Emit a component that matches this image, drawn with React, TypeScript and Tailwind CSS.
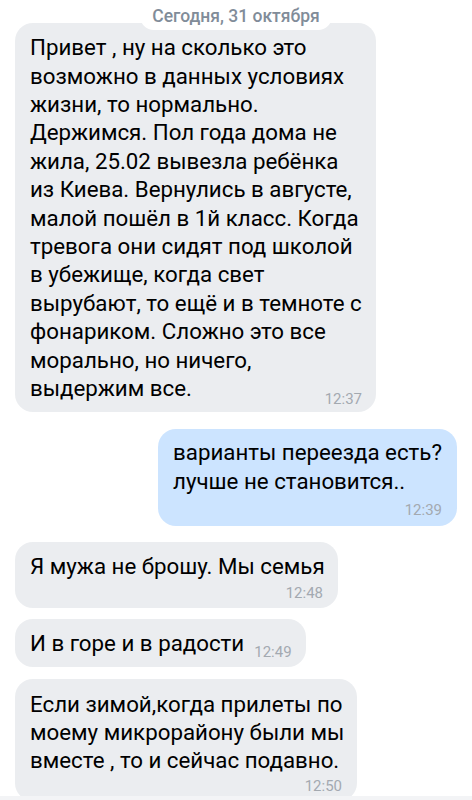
import React from "react";

const font = { fontFamily: "Roboto, 'Noto Sans', Arial, sans-serif" };

function Line({ children }: { children: React.ReactNode }) {
  return <div className="whitespace-nowrap leading-[28.4px]">{children}</div>;
}

function Time({ t }: { t: string }) {
  return <div className="text-[15px] leading-[18px] text-[#a3a9b0] whitespace-nowrap">{t}</div>;
}

export default function App() {
  return (
    <div className="w-[472px] h-[800px] bg-white overflow-hidden flex flex-col" style={font}>
      <div className="flex-1 overflow-hidden flex flex-col text-[22.3px] text-black">
        {/* date pill */}
        <div className="flex justify-center mt-[2px] -mb-[7px] relative z-10 shrink-0">
          <div className="h-[28px] leading-[28px] px-[12px] bg-white rounded-[14px] text-[17.5px] font-medium text-[#818c99] whitespace-nowrap">
            Сегодня, 31 октября
          </div>
        </div>

        {/* bubble 1 */}
        <div className="ml-[15px] w-[361px] bg-[#ebedf0] rounded-[18px] pl-[15px] pr-[14px] pt-[10.2px] pb-[4.5px] shrink-0">
          <Line>Привет , ну на сколько это</Line>
          <Line>возможно в данных условиях</Line>
          <Line>жизни, то нормально.</Line>
          <Line>Держимся. Пол года дома не</Line>
          <Line>жила, 25.02 вывезла ребёнка</Line>
          <Line>из Киева. Вернулись в августе,</Line>
          <Line>малой пошёл в 1й класс. Когда</Line>
          <Line>тревога они сидят под школой</Line>
          <Line>в убежище, когда свет</Line>
          <Line>вырубают, то ещё и в темноте с</Line>
          <Line>фонариком. Сложно это все</Line>
          <Line>морально, но ничего,</Line>
          <div className="flex items-start justify-between">
            <Line>выдержим все.</Line>
            <div className="mt-[15.5px]">
              <Time t="12:37" />
            </div>
          </div>
        </div>

        {/* bubble 2 outgoing */}
        <div className="flex justify-end mt-[17px] pr-[15px] shrink-0">
          <div className="w-[299px] bg-[#cce4ff] rounded-[18px] pl-[15px] pr-[15px] pt-[9.2px] pb-[7px]">
            <Line>варианты переезда есть?</Line>
            <Line>лучше не становится..</Line>
            <div className="flex justify-end mt-[5.5px]">
              <Time t="12:39" />
            </div>
          </div>
        </div>

        {/* bubble 3 */}
        <div className="ml-[15px] mt-[16px] w-[323px] bg-[#ebedf0] rounded-[18px] pl-[15px] pr-[15px] pt-[10.6px] pb-[6px] shrink-0">
          <Line>Я мужа не брошу. Мы семья</Line>
          <div className="flex justify-end mt-[3px]">
            <Time t="12:48" />
          </div>
        </div>

        {/* bubble 4 */}
        <div className="ml-[15px] mt-[11px] w-[291px] bg-[#ebedf0] rounded-[18px] pl-[15px] pr-[15px] pt-[10.2px] pb-[5.8px] shrink-0">
          <div className="flex items-start justify-between">
            <Line>И в горе и в радости</Line>
            <div className="mt-[14.7px] ml-[10px]">
              <Time t="12:49" />
            </div>
          </div>
        </div>

        {/* bubble 5 */}
        <div className="ml-[15px] mt-[11.5px] w-[342px] bg-[#ebedf0] rounded-[18px] pl-[15px] pr-[15px] pt-[10.9px] pb-[6px] shrink-0">
          <Line>Если зимой,когда прилеты по</Line>
          <Line>моему микрорайону были мы</Line>
          <Line>вместе , то и сейчас подавно.</Line>
          <div className="flex justify-end mt-[2px]">
            <Time t="12:50" />
          </div>
        </div>
      </div>
      <div className="h-[4px] shrink-0 bg-[#f3f4f6]" />
    </div>
  );
}
